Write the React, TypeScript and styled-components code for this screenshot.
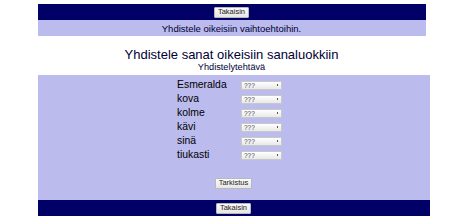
import styled, { createGlobalStyle } from "styled-components";

const GlobalStyle = createGlobalStyle`
    html, body {
        margin: 0;
        padding: 0;
        background: #ffffff;
        font-family: "Liberation Sans", Arial, sans-serif;
    }
`;

const Page = styled.div`
    width: 392px;
    margin: 4px auto 0;
`;

const TopBar = styled.div`
    width: 388px;
    height: 16px;
    background-color: #000066;
    display: flex;
    justify-content: center;
    align-items: center;
`;

const Banner = styled.div`
    width: 388px;
    height: 16px;
    background-color: #bbbbee;
    color: #000033;
    font-size: 9.5px;
    display: flex;
    justify-content: center;
    align-items: center;
`;

const Heading = styled.div`
    display: flex;
    flex-direction: column;
    align-items: center;
    color: #000033;
    padding-top: 11px;
    height: 28px;
    width: 388px;
`;

const Title = styled.h1`
    font-size: 13px;
    font-weight: normal;
    margin: 0;
    line-height: 15px;
`;

const Subtitle = styled.div`
    font-size: 9.2px;
    line-height: 11px;
`;

const Panel = styled.div`
    width: 392px;
    height: 125px;
    background-color: #bbbbee;
    display: flex;
    flex-direction: column;
    align-items: center;
    padding-top: 3px;
    box-sizing: border-box;
`;

const Rows = styled.div`
    display: grid;
    grid-template-columns: 64px 41px;
    grid-auto-rows: 14px;
    margin-right: 8px;
`;

const Label = styled.span`
    font-size: 10.4px;
    line-height: 14px;
    color: #000000;
`;

const Select = styled.div`
    height: 9px;
    box-sizing: border-box;
    border: 1px solid #c8c8c8;
    background: linear-gradient(#ffffff, #e8e8e8);
    font-size: 6.5px;
    line-height: 7px;
    color: #444444;
    padding-left: 2px;
    display: flex;
    justify-content: space-between;
    align-items: center;
    align-self: center;
    &::after {
        content: "";
        width: 1px;
        height: 2px;
        background: #555555;
        margin-right: 3px;
    }
`;

const Button = styled.button`
    font-family: "Liberation Sans", Arial, sans-serif;
    font-size: 7.5px;
    line-height: 8px;
    height: 11px;
    padding: 0 3px;
    border: 1px solid #b8b8b8;
    border-radius: 1px;
    background: linear-gradient(#fbfbfb, #e6e6e6);
    color: #222222;
`;

const CheckRow = styled.div`
    margin-top: 9px;
`;

const BottomBar = styled(TopBar)`
    width: 392px;
`;

const words = ["Esmeralda", "kova", "kolme", "kävi", "sinä", "tiukasti"];

function App() {
    return (
        <>
            <GlobalStyle />
            <Page>
                <TopBar>
                    <Button>Takaisin</Button>
                </TopBar>
                <Banner>Yhdistele oikeisiin vaihtoehtoihin.</Banner>
                <Heading>
                    <Title>Yhdistele sanat oikeisiin sanaluokkiin</Title>
                    <Subtitle>Yhdistelytehtävä</Subtitle>
                </Heading>
                <Panel>
                    <Rows>
                        {words.map((w) => (
                            <>
                                <Label key={w}>{w}</Label>
                                <Select key={w + "-s"}>???</Select>
                            </>
                        ))}
                    </Rows>
                    <CheckRow>
                        <Button>Tarkistus</Button>
                    </CheckRow>
                </Panel>
                <BottomBar>
                    <Button>Takaisin</Button>
                </BottomBar>
            </Page>
        </>
    );
}

export default App;
